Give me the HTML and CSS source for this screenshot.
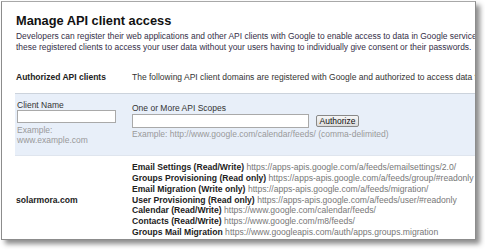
FILE: index.html
```html
<!DOCTYPE html>
<html>
<head>
<meta charset="utf-8">
<link rel="stylesheet" href="styles.css">
</head>
<body>
<div class="frame">
  <div class="content">
    <h1 class="title">Manage API client access</h1>
    <p class="desc">Developers can register their web applications and other API clients with Google to enable access to data in Google services. You can authorize<br>these registered clients to access your user data without your users having to individually give consent or their passwords.</p>
    <div class="row intro">
      <div class="label">Authorized API clients</div>
      <div class="intro-text">The following API client domains are registered with Google and authorized to access data for your users.</div>
    </div>
    <div class="panel">
      <div class="field-name">
        <div class="field-label">Client Name</div>
        <input class="input-name" type="text">
        <div class="hint">Example:<br>www.example.com</div>
      </div>
      <div class="field-scopes">
        <div class="field-label">One or More API Scopes</div>
        <div class="scope-line">
          <input class="input-scopes" type="text">
          <button class="btn">Authorize</button>
        </div>
        <div class="hint">Example: http://www.google.com/calendar/feeds/ (comma-delimited)</div>
      </div>
    </div>
    <div class="row client">
      <div class="domain">solarmora.com</div>
      <div class="scopes">
        <div><b>Email Settings (Read/Write)</b> <span class="url">https://apps-apis.google.com/a/feeds/emailsettings/2.0/</span></div>
        <div><b>Groups Provisioning (Read only)</b> <span class="url">https://apps-apis.google.com/a/feeds/group/#readonly</span></div>
        <div><b>Email Migration (Write only)</b> <span class="url">https://apps-apis.google.com/a/feeds/migration/</span></div>
        <div><b>User Provisioning (Read only)</b> <span class="url">https://apps-apis.google.com/a/feeds/user/#readonly</span></div>
        <div><b>Calendar (Read/Write)</b> <span class="url">https://www.google.com/calendar/feeds/</span></div>
        <div><b>Contacts (Read/Write)</b> <span class="url">https://www.google.com/m8/feeds/</span></div>
        <div><b>Groups Mail Migration</b> <span class="url">https://www.googleapis.com/auth/apps.groups.migration</span></div>
      </div>
    </div>
  </div>
</div>
</body>
</html>
```

FILE: styles.css
```css
html, body {
  margin: 0;
  padding: 0;
  background: #fff;
}
body {
  font-family: "Liberation Sans", Arial, sans-serif;
  color: #222;
  width: 485px;
  height: 250px;
  overflow: hidden;
}
.frame {
  margin: 1px 0 0 1px;
  width: 473px;
  height: 237px;
  border: 1px solid #8c8c8c;
  border-top-color: #a8a8a8;
  background: #fff;
  box-shadow: 4px 4px 5px rgba(0, 0, 0, 0.45);
  overflow: hidden;
}
.content {
  padding: 11px 0 0 14px;
  width: 620px;
}
.title {
  margin: 0;
  font-size: 12.8px;
  line-height: 15px;
  font-weight: bold;
  color: #111;
}
.desc {
  margin: 3px 0 0;
  font-size: 8.45px;
  line-height: 11px;
  color: #352f48;
  white-space: nowrap;
}
.row {
  display: grid;
  grid-template-columns: 116px 1fr;
}
.intro {
  margin-top: 19px;
  font-size: 8.5px;
  line-height: 11px;
  white-space: nowrap;
}
.label {
  font-weight: bold;
  color: #222;
}
.intro-text {
  color: #333;
}
.panel {
  margin: 10px 0 0 -1px;
  padding: 6px 0 10px 2px;
  background: #e8eff9;
  border-top: 1px solid #ccd3dc;
  border-bottom: 1px solid #dfe5ee;
  display: grid;
  grid-template-columns: 115px 1fr;
  font-size: 8.5px;
  line-height: 10px;
}
.field-label {
  color: #333;
}
.input-name {
  display: block;
  box-sizing: border-box;
  margin: 0;
  width: 99px;
  height: 13px;
  border: 1px solid #a9a9a9;
  background: #fff;
  padding: 0;
}
.hint {
  color: #999;
  margin-top: 2px;
}
.field-scopes {
  padding-top: 3px;
}
.scope-line {
  display: flex;
  align-items: center;
  gap: 7px;
  margin-top: 1px;
}
.input-scopes {
  box-sizing: border-box;
  width: 177px;
  height: 14px;
  border: 1px solid #a9a9a9;
  background: #fff;
  padding: 0;
  margin: 0;
}
.btn {
  box-sizing: border-box;
  height: 12px;
  width: 43px;
  padding: 0;
  margin: 0;
  font-family: "Liberation Sans", Arial, sans-serif;
  font-size: 8.5px;
  line-height: 10px;
  color: #111;
  border: 1px solid #888;
  border-radius: 2px;
  background: linear-gradient(#f6f6f6, #dcdcdc);
}
.scope-line + .hint {
  margin-top: 1px;
}
.client {
  margin-top: 6px;
  font-size: 8.6px;
  line-height: 10.85px;
  white-space: nowrap;
  align-items: center;
}
.domain {
  font-weight: bold;
  color: #222;
}
.scopes b {
  color: #222;
}
.url {
  color: #777;
}
```
